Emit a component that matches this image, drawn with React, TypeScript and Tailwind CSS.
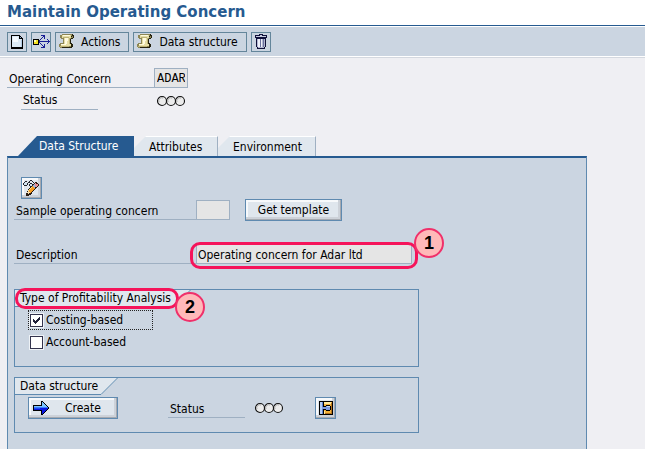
import type { ReactNode } from 'react';

function DocumentIcon() {
  return (
    <svg width="14" height="16" viewBox="0 0 14 16" shapeRendering="crispEdges">
      <path d="M1 1h9v1h1v1h1v1h1v11H1z" fill="#000" />
      <path d="M2 2h7v3h3v8H2z" fill="#dceaf6" />
      <path d="M3 3h5v5H3z" fill="#f6fbff" />
      <path d="M10 3h1v1h-1z" fill="#8fb0d8" />
      <path d="M11 6h1v7h-1z" fill="#b4cbe6" />
    </svg>
  );
}

function WhereUsedIcon() {
  return (
    <svg width="17" height="16" viewBox="0 0 17 16" shapeRendering="crispEdges">
      <path d="M0 5h6v6H0z" fill="#000" />
      <path d="M1 6h4v4H1z" fill="#f4e020" />
      <path d="M1 6h2v2H1z" fill="#fffbb0" />
      <path
        d="M6 7h11v1H6zM15 6h1v3h-1zM14 5h1v1h-1zM14 9h1v1h-1zM6 6h1v1H6zM7 5h1v1H7zM8 4h1v1H8zM9 3h1v1H9zM10 2h1v1h-1zM8 1h4v1H8zM11 1h1v4h-1zM6 8h1v1H6zM7 9h1v1H7zM8 10h1v1H8zM9 11h1v1H9zM10 12h1v1h-1zM8 13h4v1H8zM11 10h1v4h-1z"
        fill="#1a1f96"
      />
    </svg>
  );
}

function ScrollIcon() {
  return (
    <svg width="16" height="15" viewBox="0 0 16 15" shapeRendering="crispEdges">
      <path d="M3 0h11v1h1v3h-1v1h-2v4h1v1h1v3h-1v1H1v-1H0v-3h1V9h3V5H2V4H1V1h2z" fill="#8d8654" />
      <path d="M3 1h9v3h-1v6h1v2H2v-2h3V4H3z" fill="#e6dea6" />
      <path d="M4 1h7v1H4zM6 4h3v3H6zM6 7h2v3H6zM2 10h5v1H2z" fill="#fffbe0" />
      <path d="M4 3h6v1H4zM1 12h9v1H1zM10 4h1v6h-1z" fill="#bdb377" />
      <path d="M13 0h1v1h1v3h-1v1h-2V4h2V2h-1zM12 2h1v1h-1zM11 5h1v4h1v1h1v3h-1v1H3v-1h9v-3h-1z" fill="#25220f" />
    </svg>
  );
}

function TrashIcon() {
  return (
    <svg width="14" height="16" viewBox="0 0 14 16" shapeRendering="crispEdges">
      <path d="M5 0h4v1h4v3H1V1h4z" fill="#10103a" />
      <path d="M2 2h10v1H2zM6 1h2v1H6z" fill="#c9cde2" />
      <path d="M2 4h10v9h-1v2H3v-2H2z" fill="#10103a" />
      <path d="M3 5h8v8h-1v1H4v-1H3z" fill="#b3b8d2" />
      <path d="M4 5h2v8H4zM7 5h1v8H7z" fill="#eef0fa" />
      <path d="M6 5h1v8H6zM9 5h1v8H9z" fill="#6a6f9c" />
    </svg>
  );
}

function GlassesPencilIcon() {
  return (
    <svg width="17" height="16" viewBox="0 0 17 16" shapeRendering="crispEdges">
      <path
        d="M2 1h2v1H2zM1 2h1v1H1zM0 3h1v2H0zM1 5h3v1H1zM4 3h1v2H4zM5 2h2v1H5zM6 4h1v2H6zM7 6h2v1H7zM9 4h1v2H9zM7 3h2v1H7zM6 1h1v1H6zM7 0h2v1H7zM9 1h1v1H9zM10 2h1v1h-1z"
        fill="#20242c"
      />
      <path d="M1 3h3v2H1zM7 4h2v2H7z" fill="#cfe2ee" />
      <path d="M12 2h2v1h1v1h1v2h-1v1h-1v1h-1v1h-1v1h-1v1h-1v1h-1v1H9v1H8v1H6v1H3v-3h1v-2h1V9h1V8h1V7h2V6h1V4h1V3h1z" fill="#2a1c12" />
      <path d="M12 3h1v1h2v2h-1v1h-1V6h-1V5h-1V4h1z" fill="#e98e96" />
      <path d="M11 4h1v2h1v1h-1v1h-1V7h-1V5h1z" fill="#9fb4d6" />
      <path d="M9 6h1v1h1v1h1v1h-1v1h-1v1H9v1H8v1H7v-1H6v-1H5v-1h1V9h1V8h1V7h1z" fill="#f79b1e" />
      <path d="M8 7h1v1H8v1H7v1H6v1H5v-1h1V9h1V8h1z" fill="#ffe07a" />
      <path d="M5 11h1v1h1v1H6v1H5v-1H4v-1h1z" fill="#f4dcae" />
    </svg>
  );
}

function ArrowIcon() {
  return (
    <svg width="16" height="14" viewBox="0 0 16 14" shapeRendering="crispEdges">
      <path d="M8 0h2v1h1v1h1v1h1v1h1v1h1v1h1v2h-1v1h-1v1h-1v1h-1v1h-1v1h-1v1H8v-4H0V4h8z" fill="#000" />
      <path d="M9 1h1v1h1v1h1v1h1v1h1v1H1V5h8z" fill="#7cc4ff" />
      <path d="M1 6h14v1H1z" fill="#3b7dff" />
      <path d="M1 7h14v1h-1v1h-1v1h-1v1h-1v1h-1v1H9V9H1z" fill="#0a18e0" />
      <path d="M1 7h6v1H1z" fill="#1f4ef0" />
    </svg>
  );
}

function ActivateIcon() {
  return (
    <svg width="14" height="14" viewBox="0 0 14 14" shapeRendering="crispEdges">
      <path d="M0 0h14v14H0z" fill="#000" />
      <path d="M1 1h3v12H1z" fill="#5d7fd0" />
      <path d="M1 1h2v12H1z" fill="#b4cdf4" />
      <path d="M5 1h8v12H5z" fill="#f2b13a" />
      <path d="M5 1h7v2H5zM5 10h1v3H5z" fill="#ffeaa0" />
      <path d="M12 2h1v11H6v-1h6z" fill="#b3711b" />
      <path d="M7 4h4v1h1v4h-1v1H7V9H4V5h3z" fill="#000" />
      <path d="M3 6h4v2H3zM7 5h4v4H7z" fill="#7f9ce0" />
      <path d="M8 5h3v1H8z" fill="#c4dcfa" />
    </svg>
  );
}

function StatusLights() {
  return (
    <svg width="30" height="12" viewBox="0 0 30 12" role="img" aria-label="Inactive">
      {[6, 15, 24].map((cx) => (
        <g key={cx}>
          <circle cx={cx} cy="6" r="4.5" fill="#ececec" stroke="#101010" strokeWidth="1.1" />
          <path d={`M${cx - 3} 7a3 3 0 0 1 4-4`} fill="none" stroke="#aaa" />
        </g>
      ))}
    </svg>
  );
}

function ToolbarButton({ children, label }: { children: ReactNode; label?: string }) {
  return (
    <button
      aria-label={label}
      className="flex h-5 min-w-5 items-center justify-center border border-[#64869b] bg-[#cbd5e1]"
    >
      {children}
    </button>
  );
}

function RaisedButton({ children, label, className }: { children: ReactNode; label?: string; className: string }) {
  return (
    <button
      aria-label={label}
      className={`flex h-[22px] shrink-0 items-center border border-[#5f8ab0] bg-[#dfe6ed] shadow-[inset_-1px_-1px_0_#a5a9b0,inset_-3px_-3px_0_#cdd2d9,inset_2px_2px_0_#f7f9fb] ${className}`}
    >
      {children}
    </button>
  );
}

function Badge({ children, className }: { children: ReactNode; className: string }) {
  return (
    <span
      className={`absolute flex size-[30px] items-center justify-center rounded-full border-2 border-[#f0306a] bg-[#ffb9b9] font-['Liberation_Sans',sans-serif] text-[18px] font-bold ${className}`}
    >
      {children}
    </span>
  );
}

function GroupTitle({ children, className }: { children: ReactNode; className: string }) {
  return (
    <div className="flex h-[17px]">
      <h2 className={`border-b border-[#5f8ab0] bg-[#e0e7ee] pl-[5px] leading-4 whitespace-nowrap ${className}`}>
        {children}
      </h2>
      <svg width="17" height="17" viewBox="0 0 17 17">
        <path d="M0 0h17L0 17z" fill="#e0e7ee" />
        <path d="M0 16.5L16.5 0" stroke="#5f8ab0" />
      </svg>
    </div>
  );
}

function CheckRow({ label, checked, focused }: { label: string; checked?: boolean; focused?: boolean }) {
  return (
    <label
      className={`flex h-5 w-[125px] items-center gap-[3px] border border-dotted pl-px ${
        focused ? 'border-[#222]' : 'border-transparent'
      }`}
    >
      <span className="relative size-[13px]">
        <input
          type="checkbox"
          defaultChecked={checked}
          className="peer block size-[13px] appearance-none border border-[#33334d] bg-white outline outline-[#eef2f6]"
        />
        <svg
          viewBox="0 0 13 13"
          className="pointer-events-none absolute inset-0 hidden peer-checked:block"
          shapeRendering="crispEdges"
        >
          <path d="M3 5h1v1h1v1h1V6h1V5h1V4h1V3h1v3H9v1H8v1H7v1H6v1H5V9H4V8H3z" fill="#22223a" />
        </svg>
      </span>
      {label}
    </label>
  );
}

const TABS = [
  { name: 'Attributes', width: 'w-[84px]' },
  { name: 'Environment', width: 'w-[98px]' },
];

export default function App() {
  return (
    <div className="flex min-h-screen flex-col bg-[#efeff3] font-['DejaVu_Sans_Condensed','DejaVu_Sans',sans-serif] text-[12px] leading-4 text-black">
      <header className="border-b border-[#265a90] bg-white">
        <h1 className="h-[25px] pl-[7px] font-['DejaVu_Sans',sans-serif] text-[15px] leading-6 font-bold text-[#265a90]">
          Maintain Operating Concern
        </h1>
      </header>

      <div className="flex h-[31px] items-center gap-1 border-y border-white bg-[#cbd5e1] px-[7px]">
        <ToolbarButton label="New">
          <DocumentIcon />
        </ToolbarButton>
        <ToolbarButton label="Where used">
          <WhereUsedIcon />
        </ToolbarButton>
        <ToolbarButton>
          <span className="flex items-center gap-1.5 pr-2 pl-[3px]">
            <ScrollIcon />
            Actions
          </span>
        </ToolbarButton>
        <ToolbarButton>
          <span className="flex items-center gap-1.5 pr-2 pl-[3px]">
            <ScrollIcon />
            Data structure
          </span>
        </ToolbarButton>
        <ToolbarButton label="Delete">
          <TrashIcon />
        </ToolbarButton>
      </div>
      <div className="h-px bg-[#d4d8df]" />

      <section className="pt-[10px] pl-[7px]">
        <div className="flex h-5">
          <label htmlFor="concern" className="w-[147px] border-b border-[#9fb0c2] pt-[3px] pl-0.5">
            Operating Concern
          </label>
          <input
            id="concern"
            readOnly
            defaultValue="ADAR"
            className="h-5 w-[34px] border border-[#9fb0c2] bg-[#e5e5e5] px-0.5 pt-0.5 font-['Liberation_Mono',monospace] text-[12px]"
          />
        </div>
        <div className="flex h-[22px] items-end pl-[14px]">
          <span className="h-[18px] w-[77px] border-b border-[#9fb0c2] pl-0.5">Status</span>
          <span className="flex h-[18px] items-center pl-[58px]">
            <StatusLights />
          </span>
        </div>
      </section>

      <nav className="mt-[26px] ml-[18px] flex h-5" role="tablist">
        <button
          role="tab"
          aria-selected="true"
          className="w-[116px] bg-[#265a90] pl-[21px] text-left text-white [clip-path:polygon(19px_0,100%_0,100%_100%,0_100%)]"
        >
          Data Structure
        </button>
        {TABS.map((tab) => (
          <button
            key={tab.name}
            role="tab"
            aria-selected="false"
            className={`border-t border-r border-t-white border-r-[#9fb0c2] bg-[#e0e7ee] pl-[15px] text-left [clip-path:polygon(12px_0,100%_0,100%_100%,0_100%,0_12px)] ${tab.width}`}
          >
            {tab.name}
          </button>
        ))}
      </nav>

      <main className="mr-[58px] ml-[7px] flex-1 border-x border-t-2 border-x-[#5f8ab0] border-t-[#265a90] bg-[#cbd5e1] pt-[19px] pl-1.5">
        <RaisedButton label="Display / Change" className="ml-[7px] w-[21px] justify-center">
          <GlassesPencilIcon />
        </RaisedButton>

        <div className="flex h-[22px] items-center">
          <label htmlFor="sample" className="h-5 w-[182px] border-b border-[#9fb0c2] pt-[3px] pl-0.5">
            Sample operating concern
          </label>
          <input id="sample" readOnly className="h-5 w-[34px] border border-[#9fb0c2] bg-[#e5e5e5] px-0.5" />
          <RaisedButton className="ml-[15px] w-[97px] justify-center">Get template</RaisedButton>
        </div>

        <div className="relative mt-[23px] flex h-5">
          <label htmlFor="description" className="w-[182px] border-b border-[#9fb0c2] pt-[3px] pl-0.5">
            Description
          </label>
          <input
            id="description"
            readOnly
            defaultValue="Operating concern for Adar ltd"
            className="h-5 w-[216px] border border-[#9fb0c2] bg-[#e5e5e5] px-px pt-0.5"
          />
          <span className="absolute -top-0.5 left-[176px] h-[27px] w-[228px] rounded-[10px] border-3 border-[#f5145a]" />
          <Badge className="-top-4 left-[400px]">1</Badge>
        </div>

        <section className="relative mt-[25px] h-[78px] w-[405px] border border-[#5f8ab0]">
          <GroupTitle className="w-[159px]">Type of Profitability Analysis</GroupTitle>
          <div className="mt-[3px] ml-[13px] flex flex-col gap-0.5">
            <CheckRow label="Costing-based" checked focused />
            <CheckRow label="Account-based" />
          </div>
          <span className="absolute -top-0.5 left-0 h-[21px] w-[164px] rounded-[10px] border-3 border-[#f5145a]" />
          <Badge className="top-0.5 left-[160px]">2</Badge>
        </section>

        <section className="mt-[10px] h-14 w-[405px] border border-[#5f8ab0]">
          <GroupTitle className="w-[86px]">Data structure</GroupTitle>
          <div className="mt-0.5 ml-[13px] flex">
            <RaisedButton className="w-[90px] gap-4 pl-1">
              <ArrowIcon />
              Create
            </RaisedButton>
            <span className="mt-0.5 ml-[50px] h-[19px] w-[77px] border-b border-[#9fb0c2] pt-0.5 pl-0.5">
              Status
            </span>
            <span className="ml-[9px] flex items-center">
              <StatusLights />
            </span>
            <RaisedButton label="Activate" className="ml-[31px] w-[21px] justify-center">
              <ActivateIcon />
            </RaisedButton>
          </div>
        </section>
      </main>
    </div>
  );
}
